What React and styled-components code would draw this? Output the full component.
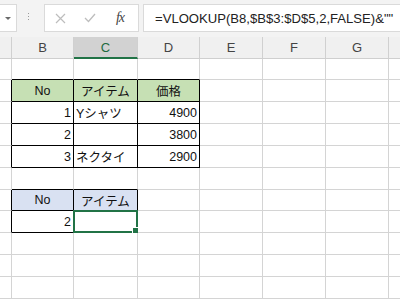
import React from "react";
import styled, { createGlobalStyle } from "styled-components";

const GlobalStyle = createGlobalStyle`
  body {
    margin: 0;
    font-family: "Liberation Sans", "Noto Sans CJK JP", sans-serif;
    background: #ffffff;
    overflow: hidden;
  }
`;

const Sheet = styled.div`
  width: 400px;
  height: 299px;
  overflow: hidden;
  display: flex;
  flex-direction: column;
`;

const FormulaBar = styled.div`
  display: flex;
  align-items: flex-start;
  height: 40px;
  padding-top: 4px;
  box-sizing: border-box;
  background: #f3f3f3;
`;

const NameBox = styled.div`
  width: 17px;
  height: 28px;
  box-sizing: border-box;
  background: #fff;
  border: 1px solid #dadada;
  border-left: none;
  display: flex;
  align-items: center;
  justify-content: center;
`;

const Arrow = styled.span`
  width: 0;
  height: 0;
  border-left: 3px solid transparent;
  border-right: 3px solid transparent;
  border-top: 3px solid #6a6a6a;
`;

const Grip = styled.div`
  width: 3px;
  margin: 9px 12px 0 11px;
  display: flex;
  flex-direction: column;
  gap: 2px;

  span {
    width: 1px;
    height: 1px;
    background: #9a9a9a;
  }
`;

const ButtonBox = styled.div`
  width: 95px;
  height: 28px;
  margin-left: 1px;
  box-sizing: border-box;
  background: #fff;
  border: 1px solid #dadada;
  display: flex;
  align-items: center;
`;

const BarButton = styled.span`
  width: 30px;
  display: flex;
  justify-content: center;
  align-items: center;
  color: ${(p) => (p.$dim ? "#bdbdbd" : "#555")};
`;

const Fx = styled.span`
  font-family: "Liberation Serif", serif;
  font-style: italic;
  font-size: 14px;
  color: #444;
  letter-spacing: -1px;
`;

const FormulaInput = styled.div`
  flex: 1;
  height: 28px;
  margin-left: 4px;
  box-sizing: border-box;
  background: #fff;
  border: 1px solid #dadada;
  border-right: none;
  padding-left: 11px;
  display: flex;
  align-items: center;
  font-size: 13.1px;
  color: #222;
  white-space: nowrap;
  overflow: hidden;
`;

const COLS = ["A", "B", "C", "D", "E", "F", "G", "H"];
const WIDTHS = [12, 62, 64, 62, 63, 63, 63, 30];
const ROW_HEIGHTS = [21, 22, 22, 22, 22, 22, 21, 22, 22, 22, 22];

const Grid = styled.div`
  display: grid;
  grid-template-columns: ${WIDTHS.map((w) => w + "px").join(" ")};
  grid-template-rows: 22px ${ROW_HEIGHTS.map((h) => h + "px").join(" ")};
`;

const ColHeader = styled.div`
  box-sizing: border-box;
  display: flex;
  align-items: center;
  justify-content: center;
  font-size: 13px;
  background: ${(p) => (p.$active ? "#d2d2d2" : "#f0f0f0")};
  color: ${(p) => (p.$active ? "#1e6b40" : "#444")};
  border-right: 1px solid #d0d0d0;
  border-bottom: ${(p) => (p.$active ? "2px solid #217346" : "1px solid #cfcfcf")};
`;

const Cell = styled.div`
  position: relative;
  box-sizing: border-box;
  display: flex;
  align-items: center;
  justify-content: ${(p) => p.$align};
  padding: 0 2px;
  font-size: 12.5px;
  color: #111;
  white-space: nowrap;
  background: ${(p) => p.$bg || "#fff"};
  border-right: 1px solid ${(p) => (p.$right ? "#000" : "#d4d4d4")};
  border-bottom: 1px solid ${(p) => (p.$bottom ? "#000" : "#d4d4d4")};
`;

const Selection = styled.div`
  position: absolute;
  left: -1px;
  top: -1px;
  right: -1px;
  bottom: -1px;
  border: 2px solid #217346;
`;

const FillHandle = styled.span`
  position: absolute;
  right: -3px;
  bottom: -3px;
  width: 5px;
  height: 5px;
  background: #217346;
  border: 1px solid #fff;
`;

const GREEN = "#c6e0b4";
const BLUE = "#d9e1f2";

// row numbers are sheet rows (1-based), col index 0 = A
const CONTENT = {
  "2-1": { text: "No", align: "center", bg: GREEN },
  "2-2": { text: "アイテム", align: "center", bg: GREEN },
  "2-3": { text: "価格", align: "center", bg: GREEN },
  "3-1": { text: "1", align: "flex-end" },
  "3-2": { text: "Yシャツ" },
  "3-3": { text: "4900", align: "flex-end" },
  "4-1": { text: "2", align: "flex-end" },
  "4-2": { text: "" },
  "4-3": { text: "3800", align: "flex-end" },
  "5-1": { text: "3", align: "flex-end" },
  "5-2": { text: "ネクタイ" },
  "5-3": { text: "2900", align: "flex-end" },
  "7-1": { text: "No", align: "center", bg: BLUE },
  "7-2": { text: "アイテム", align: "center", bg: BLUE },
  "8-1": { text: "2", align: "flex-end" },
  "8-2": { text: "", active: true },
};

function inTable(r, c) {
  return !!CONTENT[`${r}-${c}`];
}

function SheetCell({ r, c }) {
  const data = CONTENT[`${r}-${c}`] || {};
  const right = inTable(r, c) || inTable(r, c + 1);
  const bottom = inTable(r, c) || inTable(r + 1, c);
  return (
    <Cell $align={data.align || "flex-start"} $bg={data.bg} $right={right} $bottom={bottom}>
      {data.text}
      {data.active && (
        <Selection>
          <FillHandle />
        </Selection>
      )}
    </Cell>
  );
}

export default function App() {
  return (
    <Sheet>
      <GlobalStyle />
      <FormulaBar>
        <NameBox>
          <Arrow />
        </NameBox>
        <Grip>
          <span />
          <span />
          <span />
        </Grip>
        <ButtonBox>
          <BarButton $dim>
            <svg width="11" height="11" viewBox="0 0 11 11">
              <path d="M1 1 L10 10 M10 1 L1 10" stroke="currentColor" strokeWidth="1.2" />
            </svg>
          </BarButton>
          <BarButton $dim>
            <svg width="12" height="10" viewBox="0 0 12 10">
              <path d="M1 5 L4.5 8.5 L11 1" stroke="currentColor" strokeWidth="1.3" fill="none" />
            </svg>
          </BarButton>
          <BarButton>
            <Fx>fx</Fx>
          </BarButton>
        </ButtonBox>
        <FormulaInput>=VLOOKUP(B8,$B$3:$D$5,2,FALSE)&amp;""</FormulaInput>
      </FormulaBar>
      <Grid>
        {COLS.map((col, i) => (
          <ColHeader key={col} $active={col === "C"}>
            {i === 0 || col === "H" ? "" : col}
          </ColHeader>
        ))}
        {ROW_HEIGHTS.map((_, ri) =>
          COLS.map((col, c) => <SheetCell key={`${ri}-${col}`} r={ri + 1} c={c} />)
        )}
      </Grid>
    </Sheet>
  );
}
